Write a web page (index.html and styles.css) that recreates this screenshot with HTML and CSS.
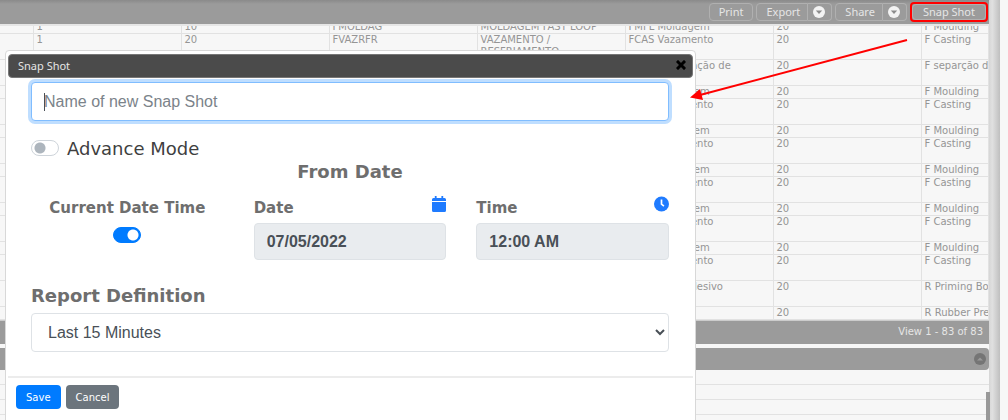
FILE: index.html
```html
<!DOCTYPE html>
<html lang="en">
<head>
<meta charset="utf-8">
<title>Snap Shot</title>
<link rel="stylesheet" href="styles.css">
</head>
<body>
<div class="page">
  <div class="frame">
    <main class="report">
      <header class="toolbar">
        <button class="tool" type="button">Print</button>
        <div class="split">
          <button class="tool" type="button">Export</button>
          <button class="tool tool-drop" type="button" aria-label="Export options"><svg viewBox="0 0 12 12" width="12" height="12"><circle cx="6" cy="6" r="6" fill="#f3f3f3"/><path d="M2.8 4.6h6.4L6 8z" fill="#8c8c8c"/></svg></button>
        </div>
        <div class="split">
          <button class="tool" type="button">Share</button>
          <button class="tool tool-drop" type="button" aria-label="Share options"><svg viewBox="0 0 12 12" width="12" height="12"><circle cx="6" cy="6" r="6" fill="#f3f3f3"/><path d="M2.8 4.6h6.4L6 8z" fill="#8c8c8c"/></svg></button>
        </div>
        <div class="callout"><button class="tool tool-snap" type="button">Snap Shot</button></div>
      </header>
      <div class="grid-view">
        <table class="grid">
          <colgroup><col class="c-num"><col class="c"><col class="c"><col class="c"><col class="c"><col class="c"><col class="c"><col></colgroup>
          <tbody>
            <tr><td></td><td>1</td><td>10</td><td>FMOLDAG</td><td>MOLDAGEM FAST LOOP</td><td>FMFL Moldagem</td><td>20</td><td>F Moulding</td></tr>
            <tr class="tall"><td></td><td>1</td><td>20</td><td>FVAZRFR</td><td>VAZAMENTO /<br>RESFRIAMENTO</td><td>FCAS Vazamento</td><td>20</td><td>F Casting</td></tr>
            <tr class="tall"><td></td><td></td><td></td><td></td><td></td><td>FSEPA Separação de</td><td>20</td><td>F separção de</td></tr>
            <tr><td></td><td></td><td></td><td></td><td></td><td>FMFL Moldagem</td><td>20</td><td>F Moulding</td></tr>
            <tr class="tall"><td></td><td></td><td></td><td></td><td></td><td>FCAS Vazamento</td><td>20</td><td>F Casting</td></tr>
            <tr><td></td><td></td><td></td><td></td><td></td><td>FMFL Moldagem</td><td>20</td><td>F Moulding</td></tr>
            <tr class="tall"><td></td><td></td><td></td><td></td><td></td><td>FCAS Vazamento</td><td>20</td><td>F Casting</td></tr>
            <tr><td></td><td></td><td></td><td></td><td></td><td>FMFL Moldagem</td><td>20</td><td>F Moulding</td></tr>
            <tr class="tall"><td></td><td></td><td></td><td></td><td></td><td>FCAS Vazamento</td><td>20</td><td>F Casting</td></tr>
            <tr><td></td><td></td><td></td><td></td><td></td><td>FMFL Moldagem</td><td>20</td><td>F Moulding</td></tr>
            <tr class="tall"><td></td><td></td><td></td><td></td><td></td><td>FCAS Vazamento</td><td>20</td><td>F Casting</td></tr>
            <tr><td></td><td></td><td></td><td></td><td></td><td>FMFL Moldagem</td><td>20</td><td>F Moulding</td></tr>
            <tr class="tall"><td></td><td></td><td></td><td></td><td></td><td>FCAS Vazamento</td><td>20</td><td>F Casting</td></tr>
            <tr class="tall"><td></td><td></td><td></td><td></td><td></td><td>RPRI Com. Adesivo</td><td>20</td><td>R Priming Bonding</td></tr>
            <tr><td></td><td></td><td></td><td></td><td></td><td></td><td>20</td><td>R Rubber Press</td></tr>
          </tbody>
        </table>
      </div>
      <div class="pager">View 1 - 83 of 83</div>
      <section class="detail">
        <div class="detail-head">
          <button class="collapse" type="button" aria-label="Collapse"><svg viewBox="0 0 12 12" width="12" height="12"><circle cx="6" cy="6" r="6" fill="#757575"/><path d="M3 7.4L6 4.4l3 3z" fill="#999"/></svg></button>
        </div>
        <div class="line"></div><div class="line"></div><div class="line"></div><div class="line"></div>
        <div class="thumb"></div>
      </section>
    </main>
    <div class="edge"></div>
  </div>

  <form class="dialog" role="dialog" aria-labelledby="dialog-title">
    <div class="titlebar">
      <span id="dialog-title">Snap Shot</span>
      <button class="close" type="button" aria-label="Close"><svg viewBox="0 0 10 10" width="10" height="10"><path d="M2 2l6 6M8 2L2 8" stroke="#000" stroke-width="3" stroke-linecap="square"/></svg></button>
    </div>
    <div class="content">
      <div class="name-box"><input class="control name" type="text" placeholder="Name of new Snap Shot" aria-label="Name of new Snap Shot" autofocus></div>
      <label class="mode"><input class="switch" type="checkbox"><span>Advance Mode</span></label>
      <h2 class="heading from">From Date</h2>
      <div class="fields">
        <label class="field current"><span class="caption">Current Date Time</span><input class="switch" type="checkbox" checked></label>
        <div class="field">
          <div class="caption-row"><label class="caption" for="date">Date</label>
            <svg viewBox="0 0 14 16" width="14" height="16"><path fill="#1f7bff" d="M2.800 0h1.800v2h4.800V0h1.800v2h1.300A1.500 1.500 0 0 1 14 3.500V5H0V3.500A1.500 1.500 0 0 1 1.500 2h1.300zM0 6h14v8.500a1.500 1.500 0 0 1-1.500 1.500h-11A1.500 1.500 0 0 1 0 14.500z"/></svg></div>
          <input class="control locked" id="date" type="text" value="07/05/2022" disabled>
        </div>
        <div class="field">
          <div class="caption-row"><label class="caption" for="time">Time</label>
            <svg viewBox="0 0 16 16" width="15" height="16"><circle cx="8" cy="8" r="8" fill="#1f7bff"/><path d="M8 3.200v5l2.600 2" fill="none" stroke="#fff" stroke-width="1.800"/></svg></div>
          <input class="control locked" id="time" type="text" value="12:00 AM" disabled>
        </div>
      </div>
      <label class="heading definition" for="definition">Report Definition</label>
      <select class="control period" id="definition"><option>Last 15 Minutes</option></select>
    </div>
    <div class="actions">
      <button class="btn save" type="submit">Save</button>
      <button class="btn cancel" type="button">Cancel</button>
    </div>
  </form>

  <svg class="arrow" viewBox="0 0 218 64" width="218" height="64" aria-hidden="true"><path d="M217 3L10 58" stroke="#f00" stroke-width="2"/><path d="M0 60.500l10-8.500 3 11z" fill="#f00"/></svg>
</div>
</body>
</html>
```
FILE: styles.css
```css
* { box-sizing: border-box; }
body { margin: 0; background: #f7f7f7; font-family: "DejaVu Sans", Verdana, sans-serif; font-size: 10px; color: #959595; }
button { font-family: inherit; font-size: inherit; color: inherit; cursor: pointer; margin: 0; }
svg { display: block; }
.page { position: relative; height: 100vh; overflow: hidden; }
.frame { display: flex; height: 100%; padding-right: 8px; }
.report { flex: 1; min-width: 0; display: flex; flex-direction: column; }
.edge { width: 11px; background: linear-gradient(to right, #d6d6d6, #e0e0e0 30%, #bfbfbf); }

.toolbar { height: 24px; flex: none; display: flex; justify-content: flex-end; align-items: center; gap: 3px; padding-right: 1px; background: linear-gradient(#8a8a8a, #9b9b9b 4px); color: #e6e6e6; font-family: "Noto Sans", sans-serif; font-size: 11px; }
.split { display: flex; }
.tool { height: 18px; padding: 0 9px; line-height: 16px; background: #9b9b9b; border: 1px solid #b0b0b0; border-radius: 4px; }
.split .tool:first-child { padding-right: 7px; border-radius: 4px 0 0 4px; }
.split .tool-drop { padding: 0 6px 0 5px; border-left: 0; border-radius: 0 4px 4px 0; }
.callout { border: 2px solid #f00; border-radius: 4px; }
.tool-snap { height: 16px; padding: 0 10px; line-height: 14px; display: block; }

.grid-view { flex: none; height: 296px; display: flex; flex-direction: column; justify-content: flex-end; overflow: hidden; border-top: 2px solid #e6e6e6; background: #f7f7f7; }
.grid { width: 100%; flex: none; table-layout: fixed; border-collapse: collapse; }
.c-num { width: 33px; }
.c { width: 148px; }
.grid tr { height: 13px; }
.grid .tall { height: 26px; }
.grid td { padding: 0 0 0 3px; line-height: 12px; vertical-align: top; white-space: nowrap; overflow: hidden; border-right: 1px solid #e2e2e2; border-bottom: 1px solid #e2e2e2; }
.pager { height: 24px; flex: none; padding-right: 6px; line-height: 21px; text-align: right; color: #e6e6e6; background: #9b9b9b; border-top: 1px solid #ccc; }
.detail { position: relative; flex: 1; margin-top: 4px; }
.detail-head { height: 22px; display: flex; justify-content: flex-end; align-items: center; padding-right: 3px; background: #9b9b9b; border-radius: 0 4px 4px 0; }
.collapse { padding: 0; border: 0; background: none; }
.line { height: 15px; border-bottom: 1px solid #e2e2e2; }
.thumb { position: absolute; right: -1px; top: 44px; bottom: 0; width: 4px; background: #999; }

.dialog { position: absolute; left: 5px; top: 50px; width: calc(100% - 317px); min-width: 560px; padding: 3px 2px; background: #fff; border: 1px solid #d8d8d8; border-radius: 4px; color: #6e6e6e; }
.titlebar { height: 24px; display: flex; justify-content: space-between; align-items: center; padding: 0 6px 2px 9px; background: #4b4b4b; border: 1px solid #777; border-radius: 4px; color: #e6e6e6; font-family: "Noto Sans", sans-serif; font-size: 11px; }
.close { padding: 0; border: 0; background: none; }
.content { display: flex; flex-direction: column; padding: 4px 24px 24px 23px; }
.control { width: 100%; height: 38px; padding: 0 12px; border: 1px solid #dee2e6; border-radius: 4px; background: #fff; color: #495057; font-family: "Liberation Sans", Arial, sans-serif; font-size: 16px; }
.name-box { position: relative; display: flex; }
.name-box::after { content: ""; position: absolute; left: 13px; top: 11px; width: 1px; height: 18px; background: #495057; }
.name { height: 39px; border-color: #80bdff; outline: 0; box-shadow: 0 0 0 3px #bfdeff; caret-color: transparent; }
.name::placeholder { color: #7b838a; opacity: 1; }
.mode { display: flex; align-items: center; gap: 8px; height: 24px; margin-top: 15px; font-size: 18px; color: #3f3f3f; }
.switch { appearance: none; width: 28px; height: 16px; flex: none; margin: 0; border: 1px solid #ced4da; border-radius: 8px; background: radial-gradient(circle at 8px 7px, #adb5bd 5px, transparent 6px) #fff; }
.switch:checked { border-color: #007bff; background: radial-gradient(circle at 19px 7px, #fff 5px, transparent 6px) #007bff; }
.heading { margin: 0; font-size: 18px; line-height: 24px; font-weight: bold; }
.from { text-align: center; }
.fields { display: grid; grid-template-columns: repeat(3, minmax(0, 1fr)); gap: 30px; margin-top: 12px; }
.field { display: flex; flex-direction: column; gap: 3px; }
.current { align-items: center; gap: 7px; }
.caption { font-size: 15px; line-height: 24px; font-weight: bold; }
.caption-row { display: flex; justify-content: space-between; align-items: flex-start; }
.locked { height: 37px; background: #e9ecef; font-weight: bold; }
.definition { margin: 24px 0 5px; }
.period { height: 39px; }
.actions { display: flex; gap: 5px; padding: 7px 8px 16px; border-top: 2px solid #ececec; }
.btn { height: 24px; padding: 0 10px; border: 0; border-radius: 4px; color: #fff; }
.save { background: #007bff; }
.cancel { background: #6c757d; }
.arrow { position: absolute; right: 100px; top: 37px; }
```
